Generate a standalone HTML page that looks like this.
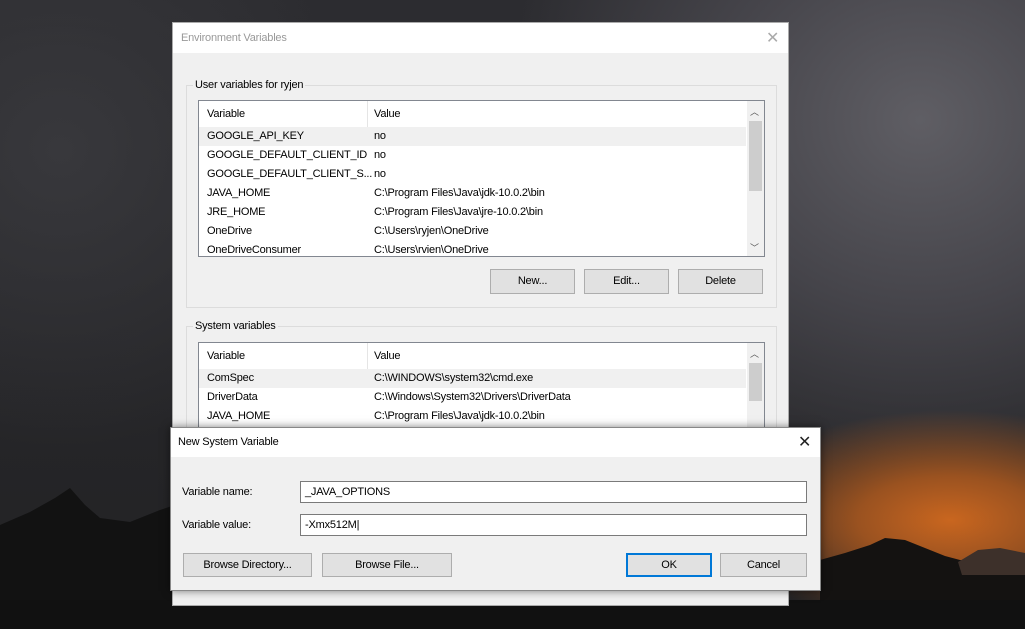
<!DOCTYPE html>
<html><head><meta charset="utf-8"><style>
*{box-sizing:border-box;margin:0;padding:0}
body{width:1025px;height:629px;overflow:hidden;position:relative;font-family:"Liberation Sans",sans-serif;font-size:11px;letter-spacing:-0.2px;color:#000;
background:radial-gradient(ellipse 230px 110px at 950px 520px,#c9661f 0%,#9a5220 40%,rgba(80,55,40,0) 100%),
radial-gradient(ellipse 420px 380px at 920px 120px,#5f5e64 0%,#45444a 50%,rgba(40,40,44,0) 100%),
radial-gradient(ellipse 300px 300px at 60px 150px,#38383c 0%,rgba(30,30,32,0) 100%),
linear-gradient(#2c2c30,#222224)}
.abs{position:absolute}
.dlg{background:#f0f0f0;border:1px solid #aaa}
.title{background:#fff}
.btn{position:absolute;background:#e1e1e1;border:1px solid #adadad;text-align:center;line-height:23px}
.grp{position:absolute;border:1px solid #dcdcdc}
.grp span{position:absolute;top:-7px;left:6px;background:#f0f0f0;padding:0 2px}
.list{position:absolute;background:#fff;border:1px solid #828790;overflow:hidden}
.row{position:absolute;left:0;height:19px;line-height:19px;width:547px}
.row b{font-weight:normal;position:absolute;left:8px}
.row i{font-style:normal;position:absolute;left:175px}
.sb{position:absolute;right:0;top:0;width:17px;bottom:0;background:#f0f0f0}
.inp{position:absolute;background:#fff;border:1px solid #7a7a7a;padding-left:4px;line-height:20px}
</style></head><body>
<svg class="abs" style="left:0;top:0" width="1025" height="629">
<path d="M0 525 L30 512 L55 498 L70 488 L85 505 L100 518 L130 522 L160 510 L175 505 L175 629 L0 629Z" fill="#121212"/>
<path d="M820 560 L845 553 L870 545 L885 538 L905 540 L925 548 L945 556 L960 560 L1025 562 L1025 629 L820 629Z" fill="#141211"/>
<path d="M958 562 L978 550 L1000 548 L1025 553 L1025 575 L962 575Z" fill="#3d302a"/>
<rect x="0" y="600" width="1025" height="29" fill="#111"/>
</svg>

<div class="abs dlg" style="left:172px;top:22px;width:617px;height:584px">
 <div class="title abs" style="left:0;top:0;width:615px;height:30px;color:#999;padding:9px 0 0 8px">Environment Variables</div>
 <div class="abs" style="left:593px;top:5px;color:#aaa;font-size:16px">✕</div>
 <div class="grp" style="left:13px;top:62px;width:591px;height:223px"><span>User variables for ryjen</span></div>
 <div class="list" style="left:25px;top:77px;width:567px;height:157px">
  <div class="row" style="top:0;height:26px;line-height:26px"><b>Variable</b><i>Value</i></div>
  <div class="abs" style="left:168px;top:0;width:1px;height:26px;background:#e5e5e5"></div>
  <div class="row" style="top:26px;background:#f0f0f0"><b>GOOGLE_API_KEY</b><i>no</i></div>
  <div class="row" style="top:45px"><b>GOOGLE_DEFAULT_CLIENT_ID</b><i>no</i></div>
  <div class="row" style="top:64px"><b>GOOGLE_DEFAULT_CLIENT_S...</b><i>no</i></div>
  <div class="row" style="top:83px"><b>JAVA_HOME</b><i>C:\Program Files\Java\jdk-10.0.2\bin</i></div>
  <div class="row" style="top:102px"><b>JRE_HOME</b><i>C:\Program Files\Java\jre-10.0.2\bin</i></div>
  <div class="row" style="top:121px"><b>OneDrive</b><i>C:\Users\ryjen\OneDrive</i></div>
  <div class="row" style="top:140px"><b>OneDriveConsumer</b><i>C:\Users\rvien\OneDrive</i></div>
  <div class="sb"><div class="abs" style="left:3px;top:4px;font-size:9px;color:#555">︿</div><div class="abs" style="left:2px;top:20px;width:13px;height:70px;background:#cdcdcd"></div><div class="abs" style="left:3px;top:140px;font-size:9px;color:#555">﹀</div></div>
 </div>
 <div class="btn" style="left:317px;top:246px;width:85px;height:25px">New...</div>
 <div class="btn" style="left:411px;top:246px;width:85px;height:25px">Edit...</div>
 <div class="btn" style="left:505px;top:246px;width:85px;height:25px">Delete</div>
 <div class="grp" style="left:13px;top:303px;width:591px;height:259px"><span>System variables</span></div>
 <div class="list" style="left:25px;top:319px;width:567px;height:140px">
  <div class="row" style="top:0;height:26px;line-height:26px"><b>Variable</b><i>Value</i></div>
  <div class="abs" style="left:168px;top:0;width:1px;height:26px;background:#e5e5e5"></div>
  <div class="row" style="top:26px;background:#f0f0f0"><b>ComSpec</b><i>C:\WINDOWS\system32\cmd.exe</i></div>
  <div class="row" style="top:45px"><b>DriverData</b><i>C:\Windows\System32\Drivers\DriverData</i></div>
  <div class="row" style="top:64px"><b>JAVA_HOME</b><i>C:\Program Files\Java\jdk-10.0.2\bin</i></div>
  <div class="sb"><div class="abs" style="left:3px;top:4px;font-size:9px;color:#555">︿</div><div class="abs" style="left:2px;top:20px;width:13px;height:38px;background:#cdcdcd"></div></div>
 </div>
</div>

<div class="abs dlg" style="left:170px;top:427px;width:651px;height:164px;border-color:#888;box-shadow:0 0 8px rgba(0,0,0,.5)">
 <div class="title abs" style="left:0;top:0;width:649px;height:29px;padding:8px 0 0 7px">New System Variable</div>
 <div class="abs" style="left:627px;top:4px;font-size:16px;color:#222">✕</div>
 <div class="abs" style="left:11px;top:58px">Variable name:</div>
 <div class="abs" style="left:11px;top:91px">Variable value:</div>
 <div class="inp" style="left:129px;top:53px;width:507px;height:22px">_JAVA_OPTIONS</div>
 <div class="inp" style="left:129px;top:86px;width:507px;height:22px">-Xmx512M|</div>
 <div class="btn" style="left:12px;top:125px;width:129px;height:24px">Browse Directory...</div>
 <div class="btn" style="left:151px;top:125px;width:130px;height:24px">Browse File...</div>
 <div class="btn" style="left:455px;top:125px;width:86px;height:24px;border:2px solid #0078d7;line-height:20px">OK</div>
 <div class="btn" style="left:549px;top:125px;width:87px;height:24px">Cancel</div>
</div>
</body></html>
